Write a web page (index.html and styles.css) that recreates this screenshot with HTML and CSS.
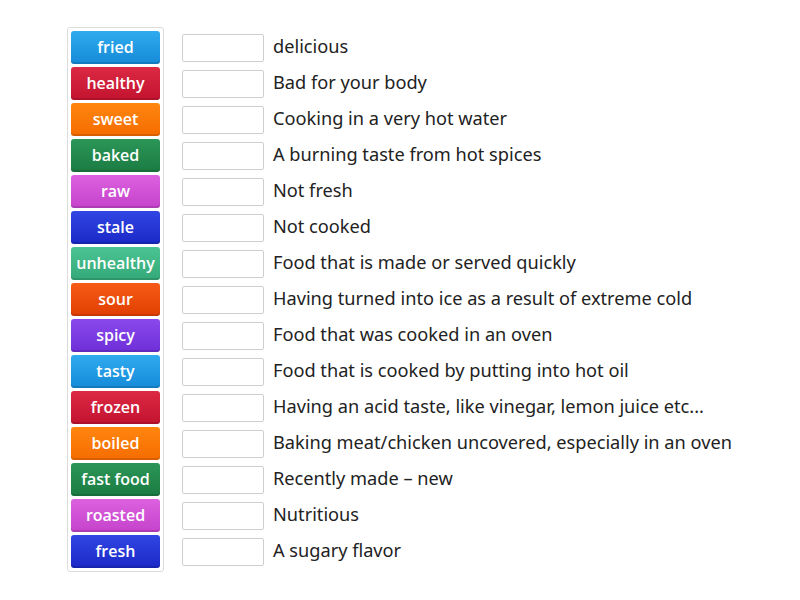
FILE: index.html
```html
<!DOCTYPE html>
<html>
<head>
<meta charset="utf-8">
<link rel="stylesheet" href="styles.css">
</head>
<body>
<div class="page">
  <div class="bank">
    <div class="tile c1">fried</div>
    <div class="tile c2">healthy</div>
    <div class="tile c3">sweet</div>
    <div class="tile c4">baked</div>
    <div class="tile c5">raw</div>
    <div class="tile c6">stale</div>
    <div class="tile c7">unhealthy</div>
    <div class="tile c8">sour</div>
    <div class="tile c9">spicy</div>
    <div class="tile c1">tasty</div>
    <div class="tile c2">frozen</div>
    <div class="tile c3">boiled</div>
    <div class="tile c4">fast food</div>
    <div class="tile c5">roasted</div>
    <div class="tile c6">fresh</div>
  </div>
  <div class="rows">
    <div class="row"><div class="slot"></div><div class="def">delicious</div></div>
    <div class="row"><div class="slot"></div><div class="def">Bad for your body</div></div>
    <div class="row"><div class="slot"></div><div class="def">Cooking in a very hot water</div></div>
    <div class="row"><div class="slot"></div><div class="def">A burning taste from hot spices</div></div>
    <div class="row"><div class="slot"></div><div class="def">Not fresh</div></div>
    <div class="row"><div class="slot"></div><div class="def">Not cooked</div></div>
    <div class="row"><div class="slot"></div><div class="def">Food that is made or served quickly</div></div>
    <div class="row"><div class="slot"></div><div class="def">Having turned into ice as a result of extreme cold</div></div>
    <div class="row"><div class="slot"></div><div class="def">Food that was cooked in an oven</div></div>
    <div class="row"><div class="slot"></div><div class="def">Food that is cooked by putting into hot oil</div></div>
    <div class="row"><div class="slot"></div><div class="def">Having an acid taste, like vinegar, lemon juice etc...</div></div>
    <div class="row"><div class="slot"></div><div class="def">Baking meat/chicken uncovered, especially in an oven</div></div>
    <div class="row"><div class="slot"></div><div class="def">Recently made – new</div></div>
    <div class="row"><div class="slot"></div><div class="def">Nutritious</div></div>
    <div class="row"><div class="slot"></div><div class="def">A sugary flavor</div></div>
  </div>
</div>
</body>
</html>
```
FILE: styles.css
```css
html, body {
  margin: 0;
  padding: 0;
  background: #ffffff;
}
.page {
  display: flex;
  align-items: flex-start;
  padding: 27px 0 0 67px;
}
.bank {
  display: flex;
  flex-direction: column;
  gap: 3px;
  width: 89px;
  padding: 3px;
  border: 1px solid #dcdcdc;
  border-radius: 3px;
}
.tile {
  height: 33px;
  box-sizing: border-box;
  padding-bottom: 2px;
  border-radius: 3px;
  display: flex;
  align-items: center;
  justify-content: center;
  color: #ffffff;
  font-family: "Open Sans", "Noto Sans", sans-serif;
  font-weight: 600;
  font-size: 16px;
  box-shadow: inset 0 -2px 0 rgba(0,0,0,0.12);
}
.c1 { background: linear-gradient(#2fabef, #168ad8); }
.c2 { background: linear-gradient(#dc2944, #c2132f); }
.c3 { background: linear-gradient(#ff860f, #f56c00); }
.c4 { background: linear-gradient(#2b9657, #1b7b42); }
.c5 { background: linear-gradient(#dc61df, #c543cb); }
.c6 { background: linear-gradient(#3146e3, #1a28c6); }
.c7 { background: linear-gradient(#4cc493, #34a878); }
.c8 { background: linear-gradient(#f75b16, #e03f02); }
.c9 { background: linear-gradient(#8a48ec, #6e2fd8); }
.rows {
  display: flex;
  flex-direction: column;
  padding-top: 4px;
  margin-left: 18px;
}
.row {
  height: 36px;
  display: flex;
  align-items: flex-start;
}
.slot {
  width: 82px;
  height: 28px;
  box-sizing: border-box;
  margin-top: 3px;
  border: 1px solid #cfcfcf;
  border-radius: 2px;
  flex: none;
}
.def {
  margin-left: 9px;
  height: 30px;
  display: flex;
  align-items: center;
  font-family: "Noto Sans", "Open Sans", sans-serif;
  font-size: 18.2px;
  color: #222222;
  white-space: nowrap;
}
```
